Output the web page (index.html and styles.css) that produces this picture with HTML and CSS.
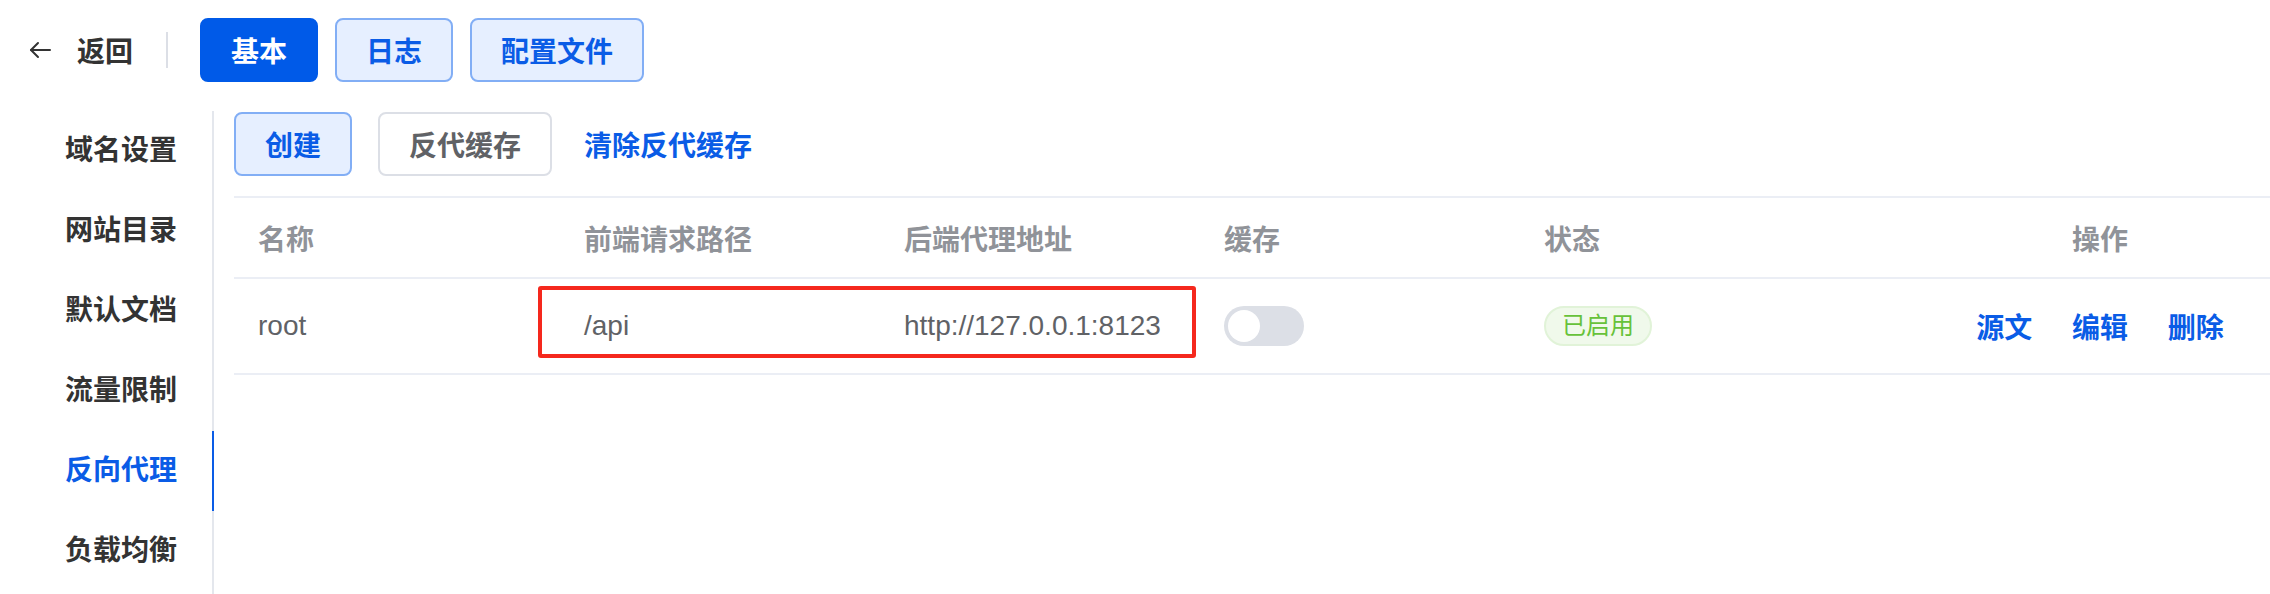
FILE: index.html
```html
<!DOCTYPE html>
<html lang="zh-CN">
<head>
    <meta charset="UTF-8">
    <meta name="viewport" content="width=device-width, initial-scale=1.0">
    <title>反向代理</title>
    <link rel="stylesheet" href="styles.css">
</head>
<body>
    <!-- 顶部栏 -->
    <div class="topbar">
        <a class="back" href="#">
            <svg class="back-icon" width="22" height="22" viewBox="0 0 22 22" fill="none" stroke="#333" stroke-width="2" stroke-linecap="round" stroke-linejoin="round">
                <path d="M21 11H2"/>
                <path d="M9 4L2 11L9 18"/>
            </svg>
            <span>返回</span>
        </a>
        <div class="divider"></div>
        <button class="tab tab-active">基本</button>
        <button class="tab">日志</button>
        <button class="tab">配置文件</button>
    </div>

    <div class="main">
        <!-- 左侧菜单 -->
        <ul class="side">
            <li>域名设置</li>
            <li>网站目录</li>
            <li>默认文档</li>
            <li>流量限制</li>
            <li class="active">反向代理</li>
            <li>负载均衡</li>
        </ul>

        <div class="content">
            <div class="toolbar">
                <button class="btn btn-light">创建</button>
                <button class="btn btn-plain">反代缓存</button>
                <a class="link" href="#">清除反代缓存</a>
            </div>

            <div class="table-wrap">
                <table class="proxy-table">
                    <colgroup>
                        <col style="width: 326px">
                        <col style="width: 320px">
                        <col style="width: 320px">
                        <col style="width: 320px">
                        <col style="width: 410px">
                        <col style="width: 340px">
                    </colgroup>
                    <thead>
                        <tr>
                            <th>名称</th>
                            <th>前端请求路径</th>
                            <th>后端代理地址</th>
                            <th>缓存</th>
                            <th>状态</th>
                            <th class="center">操作</th>
                        </tr>
                    </thead>
                    <tbody>
                        <tr>
                            <td>root</td>
                            <td>/api</td>
                            <td>http://127.0.0.1:8123</td>
                            <td><span class="switch"><span class="knob"></span></span></td>
                            <td><span class="tag">已启用</span></td>
                            <td class="center actions">
                                <a href="#">源文</a>
                                <a href="#">编辑</a>
                                <a href="#">删除</a>
                            </td>
                        </tr>
                    </tbody>
                </table>
                <!-- 标注框 -->
                <div class="mark"></div>
            </div>
        </div>
    </div>
</body>
</html>
```

FILE: styles.css
```css
/* 通用 */
body {
    font-family: "Liberation Sans", "Noto Sans CJK SC", sans-serif;
    margin: 0;
    padding: 0;
    background-color: #fff;
    color: #303133;
    font-size: 28px;
}
button {
    font-family: inherit;
    font-size: 28px;
    cursor: pointer;
}
a {
    text-decoration: none;
}

/* 顶部栏 */
.topbar {
    display: flex;
    align-items: center;
    height: 64px;
    padding: 18px 0 29px 29px;
}
.back {
    display: flex;
    align-items: center;
    color: #333;
    font-weight: 600;
}
.back-icon {
    margin-right: 26px;
}
.divider {
    width: 2px;
    height: 36px;
    background: #dcdfe6;
    margin: 0 32px 0 33px;
}
.tab {
    height: 64px;
    padding: 0 29px;
    margin-right: 17px;
    border: 2px solid #82aef5;
    border-radius: 8px;
    background: #e6efff;
    color: #0a5ce6;
    font-weight: 600;
}
.tab-active {
    background: #005ae8;
    border-color: #005ae8;
    color: #fff;
}

/* 主体 */
.main {
    display: flex;
    align-items: flex-start;
}
.side {
    list-style: none;
    margin: 0;
    padding: 0;
    width: 212px;
    min-height: 500px;
    border-right: 2px solid #e4e7ed;
}
.side li {
    height: 80px;
    line-height: 80px;
    padding-left: 65px;
    color: #333;
    font-weight: 600;
}
.side li.active {
    color: #0a5ce6;
    margin-right: -2px;
    border-right: 2px solid #0a5ce6;
}
.content {
    flex: 1;
    padding-left: 20px;
}

/* 工具栏 */
.toolbar {
    display: flex;
    align-items: center;
    margin-top: 1px;
    margin-bottom: 20px;
}
.btn {
    height: 64px;
    padding: 0 29px;
    border-radius: 8px;
    font-weight: 600;
}
.btn-light {
    background: #e6efff;
    border: 2px solid #82aef5;
    color: #0a5ce6;
    margin-right: 26px;
}
.btn-plain {
    background: #fff;
    border: 2px solid #dcdfe6;
    color: #606266;
    margin-right: 32px;
}
.link {
    color: #0a5ce6;
    font-weight: 600;
}

/* 表格 */
.table-wrap {
    position: relative;
}
.proxy-table {
    width: 2036px;
    table-layout: fixed;
    border-collapse: collapse;
}
.proxy-table th,
.proxy-table td {
    text-align: left;
    padding: 0 24px;
    white-space: nowrap;
}
.proxy-table th {
    height: 79px;
    color: #909399;
    font-weight: 600;
    border-top: 2px solid #ebeef5;
    border-bottom: 2px solid #ebeef5;
}
.proxy-table td {
    height: 94px;
    color: #606266;
    border-bottom: 2px solid #ebeef5;
}
.proxy-table .center {
    text-align: center;
}
.switch {
    display: inline-block;
    vertical-align: middle;
    position: relative;
    width: 80px;
    height: 40px;
    border-radius: 20px;
    background: #dcdfe6;
}
.knob {
    position: absolute;
    left: 4px;
    top: 4px;
    width: 32px;
    height: 32px;
    border-radius: 50%;
    background: #fff;
}
.tag {
    display: inline-block;
    vertical-align: middle;
    box-sizing: border-box;
    height: 40px;
    line-height: 36px;
    padding: 0 16px;
    border: 2px solid #e1f3d8;
    border-radius: 20px;
    background: #f0f9eb;
    color: #67c23a;
    font-size: 24px;
}
.actions a {
    color: #0a5ce6;
    font-weight: 600;
    margin: 0 16px;
}
.mark {
    position: absolute;
    left: 304px;
    top: 90px;
    width: 658px;
    height: 72px;
    box-sizing: border-box;
    border: 4px solid #f5281d;
    border-radius: 3px;
}
```
